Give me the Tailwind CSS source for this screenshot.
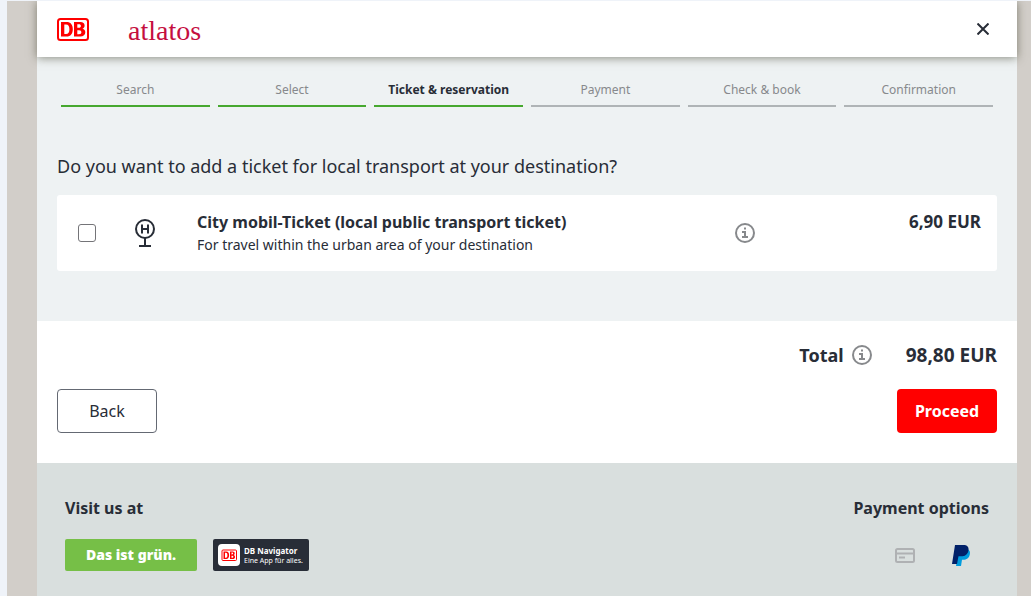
<!DOCTYPE html>
<html lang="en">
<head>
    <meta charset="UTF-8">
    <meta name="viewport" content="width=device-width, initial-scale=1.0">
    <title>Ticket &amp; reservation</title>
    <script src="https://cdn.jsdelivr.net/npm/@tailwindcss/browser@4"></script>
</head>
<body class="bg-[#eff3f9] pt-px pl-[7px] min-h-screen flex font-['Noto_Sans',sans-serif] text-[#282d37]">

    <div class="flex-1 flex overflow-hidden bg-[#d2cec9] pl-[30px] pr-[14px]">
        <div class="flex-1 flex flex-col bg-white">

            <!-- Header -->
            <header class="relative h-14 px-5 flex items-center bg-white shadow-[0_1px_9px_rgba(70,70,50,0.6)]">
                <a href="#" aria-label="DB">
                    <svg class="w-8 h-[23px]" viewBox="0 0 32 23">
                        <rect x="1" y="1" width="30" height="21" rx="2.5" fill="#fff" stroke="#f00" stroke-width="2"/>
                        <path fill="#f00" fill-rule="evenodd" d="M4 4h5.500c4.200 0 6.300 2.700 6.300 7.200S13.700 18.500 9.500 18.500H4zM7.300 6.500V16h1.700c2.400 0 3.400-1.600 3.400-4.700S11.400 6.500 9 6.500z"/>
                        <path fill="#f00" fill-rule="evenodd" d="M17 4h6.300c2.800 0 4.300 1.300 4.300 3.500 0 1.700-.8 2.700-2.100 3.200 1.800.5 2.800 1.700 2.800 3.600 0 2.700-1.900 4.200-4.900 4.200H17zM20.300 6.300v3.500h1.500c1.400 0 2.100-.6 2.100-1.800s-.7-1.700-2-1.700zM20.300 12.200v4h1.700c1.600 0 2.400-.7 2.400-2s-.8-2-2.400-2z"/>
                    </svg>
                </a>
                <a href="#" class="ml-[39px] pt-1 font-['Liberation_Serif',serif] text-[28px] leading-8 text-[#c50e3f]">atlatos</a>
                <button type="button" aria-label="Close" class="ml-auto w-7 h-7 flex items-center justify-center">
                    <svg class="w-3 h-3" viewBox="0 0 12 12" fill="none" stroke="#282d37" stroke-width="2"><path d="M.5.5l11 11M11.500.5l-11 11"/></svg>
                </button>
            </header>

            <main class="bg-[#eef2f3] px-5 pb-[50px]">
                <!-- Progress -->
                <ol class="pt-6 px-1 grid grid-cols-6 gap-2 text-center text-xs leading-[18px] text-[#87898c]">
                    <li class="pb-[6px] border-b-2 border-[#46a82f]">Search</li>
                    <li class="pb-[6px] border-b-2 border-[#46a82f]">Select</li>
                    <li class="pb-[6px] border-b-2 border-[#46a82f] font-bold text-[#282d37]" aria-current="step">Ticket &amp; reservation</li>
                    <li class="pb-[6px] border-b-2 border-[#afb4b6]">Payment</li>
                    <li class="pb-[6px] border-b-2 border-[#afb4b6]">Check &amp; book</li>
                    <li class="pb-[6px] border-b-2 border-[#afb4b6]">Confirmation</li>
                </ol>

                <h1 class="mt-[47px] text-lg leading-6">Do you want to add a ticket for local transport at your destination?</h1>

                <div class="mt-[17px] h-[76px] bg-white rounded-[3px] pl-[21px] pr-4 flex items-center">
                    <input type="checkbox" id="cityTicket" class="appearance-none w-[18px] h-[18px] border border-[#747478] rounded-[3px] bg-white checked:bg-[#282d37]">
                    <svg class="ml-[39px] w-5 h-7" viewBox="0 0 20 28" fill="none" stroke="#282d37" stroke-width="2">
                        <circle cx="10" cy="10" r="9"/>
                        <path d="M10 19v8M4 27h12M7 5.500v9M13 5.500v9M7 10h6"/>
                    </svg>
                    <label for="cityTicket" class="ml-[42px] w-[538px]">
                        <span class="block text-base leading-6 font-bold">City mobil-Ticket (local public transport ticket)</span>
                        <span class="block text-sm leading-[22px]">For travel within the urban area of your destination</span>
                    </label>
                    <button type="button" aria-label="Ticket information">
                        <svg class="w-5 h-5" viewBox="0 0 20 20" fill="none" stroke="#87898c" stroke-width="2"><circle cx="10" cy="10" r="9"/><path d="M9 4.500h2v2H9z" fill="#87898c" stroke="none"/><path d="M7 9h3v5M7 14h6"/></svg>
                    </button>
                    <span class="ml-auto self-start mt-[15px] text-[17px] leading-6 font-bold">6,90 EUR</span>
                </div>
            </main>

            <!-- Total and actions -->
            <section class="px-5 pt-[22px] pb-[30px]">
                <div class="flex items-center justify-end text-lg leading-6 font-bold">
                    <span>Total</span>
                    <button type="button" aria-label="Total information" class="ml-2">
                        <svg class="w-5 h-5" viewBox="0 0 20 20" fill="none" stroke="#87898c" stroke-width="2"><circle cx="10" cy="10" r="9"/><path d="M9 4.500h2v2H9z" fill="#87898c" stroke="none"/><path d="M7 9h3v5M7 14h6"/></svg>
                    </button>
                    <span class="ml-[34px] text-[19px] leading-6">98,80 EUR</span>
                </div>
                <div class="mt-[22px] flex justify-between text-base">
                    <button type="button" class="w-[100px] h-11 bg-white border border-[#646973] rounded-[4px]">Back</button>
                    <button type="button" class="w-[100px] h-11 bg-[#f00] text-white font-bold rounded-[4px]">Proceed</button>
                </div>
            </section>

            <!-- Footer -->
            <footer class="flex-1 flex justify-between px-7 pt-[33px] bg-[#d9dfde]">
                <div>
                    <h2 class="text-base leading-6 font-bold">Visit us at</h2>
                    <div class="mt-[19px] flex gap-4">
                        <a href="#" class="w-[132px] h-8 flex items-center justify-center rounded-[2px] bg-[#76bf47] text-white text-sm font-black">Das ist grün.</a>
                        <a href="#" class="w-24 h-8 pl-[5px] flex items-center gap-1 rounded-[2px] bg-[#282d37] text-white whitespace-nowrap">
                            <svg class="w-[22px] h-[22px] shrink-0" viewBox="0 0 22 22">
                                <rect width="22" height="22" rx="4" fill="#fff"/>
                                <rect x="4" y="6" width="14.500" height="10.500" rx="1" fill="#fff" stroke="#f00"/>
                                <path fill="#f00" fill-rule="evenodd" d="M5.500 7.500h2.800c1.900 0 2.800 1.300 2.800 3.700S10 15 8.300 15H5.500zM7 8.700v5h.9c1 0 1.500-.8 1.500-2.500S9 8.700 7.900 8.700zM12 7.500h2.700c1.300 0 2 .7 2 1.900 0 .8-.3 1.400-1 1.700.8.200 1.300.9 1.300 1.800 0 1.400-.9 2.100-2.200 2.100H12zM13.500 8.600v1.900h.6c1.500 0 1.400-1.900 0-1.900zM13.500 11.700v2.100h.7c1.500 0 1.500-2.100 0-2.100z"/>
                            </svg>
                            <span>
                                <span class="block text-[8px] leading-[10px] font-bold">DB Navigator</span>
                                <span class="block text-[7px] leading-[9px]">Eine App für alles.</span>
                            </span>
                        </a>
                    </div>
                </div>
                <div>
                    <h2 class="text-base leading-6 font-bold">Payment options</h2>
                    <div class="mt-[19px] h-8 flex items-center justify-end gap-[37px] pr-[18px]">
                        <svg class="w-5 h-[15px]" viewBox="0 0 20 15" fill="none" stroke="#afb1b3" stroke-width="2" role="img" aria-label="Credit card"><rect x="1" y="1" width="18" height="13" rx="1.500"/><path d="M1 5.500h18M4 9.500h6"/></svg>
                        <svg class="w-[19px] h-[21px]" viewBox="0 0 19 21" role="img" aria-label="PayPal">
                            <path fill="#009cde" d="M7 4h8.500c2.300 1.200 2.900 3.100 2.300 5.500-.8 3.700-3.200 5.300-6.600 5.300H10L9 21H4z"/>
                            <path fill="#012169" d="M3 0h8.200c4 0 6 2 5.200 5.700-.9 4.100-3.600 5.600-7.300 5.600H6.500L5 19H0z"/>
                        </svg>
                    </div>
                </div>
            </footer>
        </div>
    </div>

</body>
</html>
